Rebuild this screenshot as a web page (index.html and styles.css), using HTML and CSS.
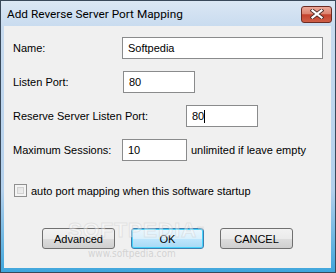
FILE: index.html
```html
<!DOCTYPE html>
<html lang="en">
<head>
    <meta charset="UTF-8">
    <title>Add Reverse Server Port Mapping</title>
    <link rel="stylesheet" href="styles.css">
</head>
<body>
    <div class="window">
        <div class="titlebar">
            <span class="title">Add Reverse Server Port Mapping</span>
            <div class="close-btn">
                <svg width="14" height="10" viewBox="0 0 14 10">
                    <path d="M2.5 1.5 L11.5 8.5 M11.5 1.5 L2.5 8.5" stroke="#4a2a26" stroke-width="3.8" stroke-linecap="square"/>
                    <path d="M2.5 1.5 L11.5 8.5 M11.5 1.5 L2.5 8.5" stroke="#ffffff" stroke-width="2.2" stroke-linecap="square"/>
                </svg>
            </div>
        </div>

        <div class="client">
            <div class="row first">
                <span class="label lbl-name">Name:</span>
                <div class="field field-name">Softpedia</div>
            </div>
            <div class="row">
                <span class="label lbl-listen">Listen Port:</span>
                <div class="field field-port">80</div>
            </div>
            <div class="row">
                <span class="label lbl-reserve">Reserve Server Listen Port:</span>
                <div class="field field-port">80<span class="caret"></span></div>
            </div>
            <div class="row">
                <span class="label lbl-max">Maximum Sessions:</span>
                <div class="field field-sessions">10</div>
                <span class="hint">unlimited if leave empty</span>
            </div>

            <div class="check-row">
                <span class="checkbox"></span>
                <span>auto port mapping when this software startup</span>
            </div>

            <div class="buttons">
                <div class="btn">Advanced</div>
                <div class="btn default">OK</div>
                <div class="btn">CANCEL</div>
            </div>

            <!-- watermark -->
            <div class="wm-logo">SOFTPEDIA<sup>™</sup></div>
            <div class="wm-url">www.softpedia.com</div>
        </div>
    </div>
</body>
</html>
```

FILE: styles.css
```css
/* General */
body {
    margin: 0;
    padding: 0;
    font-family: Tahoma, "Liberation Sans", sans-serif;
    font-size: 11px;
    color: #000;
}

.window {
    width: 336px;
    height: 273px;
    box-sizing: border-box;
    border: 1px solid #39495a;
    background: linear-gradient(to bottom, #dbe7f4 0, #c8dbef 26px, #b3d0ec 70%, #3fa6dc 100%);
    display: flex;
    flex-direction: column;
}

/* Title bar */
.titlebar {
    height: 25px;
    display: flex;
    align-items: center;
    justify-content: space-between;
    padding: 0 3px 0 6px;
}

.title {
    font-family: Roboto, "Liberation Sans", sans-serif;
    font-size: 11.8px;
    color: #000;
}

.close-btn {
    width: 29px;
    height: 15px;
    margin-top: 1px;
    border: 1px solid #6b2b23;
    border-radius: 3px;
    background: linear-gradient(to bottom, #eba899 0, #dc8470 45%, #c4422d 52%, #cf5f47 100%);
    display: flex;
    align-items: center;
    justify-content: center;
}

/* Client area */
.client {
    flex: 1;
    margin: 0 4px 4px 3px;
    background: #f0f0f0;
    padding: 0 0 0 9px;
    position: relative;
}

.row {
    display: flex;
    align-items: center;
    height: 22px;
    margin-top: 12px;
    white-space: nowrap;
}

.row.first {
    margin-top: 11px;
}

.lbl-name { width: 109px; }
.lbl-listen { width: 110px; }
.lbl-reserve { width: 173px; }
.lbl-max { width: 109px; }

.field {
    box-sizing: border-box;
    height: 22px;
    border: 1px solid #8a8b8c;
    background: #fff;
    padding: 0 5px;
    display: flex;
    align-items: center;
}

.field-name { width: 201px; }
.field-port { width: 72px; }
.field-sessions { width: 65px; }

.caret {
    display: inline-block;
    width: 1px;
    height: 13px;
    background: #000;
}

.hint {
    margin-left: 4px;
}

/* Checkbox */
.check-row {
    display: flex;
    align-items: center;
    height: 13px;
    margin-top: 23px;
    margin-left: 1px;
    white-space: nowrap;
}

.checkbox {
    width: 11px;
    height: 11px;
    border: 1px solid #8f8f8f;
    background: linear-gradient(135deg, #dcdcdc, #f6f6f6);
    box-shadow: inset 0 0 0 2px #f4f4f4, inset 0 0 0 3px #d2d2d2;
    margin-right: 4px;
}

/* Buttons */
.buttons {
    display: flex;
    justify-content: center;
    gap: 16px;
    margin-top: 31px;
    margin-left: -9px;
}

.btn {
    box-sizing: border-box;
    width: 73px;
    height: 21px;
    border: 1px solid #707070;
    border-radius: 3px;
    background: linear-gradient(to bottom, #f2f2f2 0, #ebebeb 50%, #dddddd 51%, #cfcfcf 100%);
    display: flex;
    align-items: center;
    justify-content: center;
}

.btn.default {
    border-color: #3c7fb1;
    box-shadow: inset 0 0 0 1px #48d3fb;
    background: linear-gradient(to bottom, #eaf6fd 0, #d9f0fc 50%, #bee6fd 51%, #a7d9f5 100%);
}

/* Watermark overlay */
.wm-logo {
    position: absolute;
    left: 64px;
    top: 193px;
    font-family: "Liberation Sans", sans-serif;
    font-size: 21px;
    line-height: 21px;
    font-weight: bold;
    letter-spacing: 1px;
    color: rgba(255, 255, 255, 0.4);
    -webkit-text-stroke: 1px rgba(195, 195, 195, 0.35);
    pointer-events: none;
}

.wm-logo sup {
    font-size: 7px;
    vertical-align: top;
}

.wm-url {
    position: absolute;
    left: 84px;
    top: 222px;
    font-family: "DejaVu Sans Condensed", sans-serif;
    font-size: 10px;
    color: rgba(165, 165, 165, 0.4);
    pointer-events: none;
}
```
